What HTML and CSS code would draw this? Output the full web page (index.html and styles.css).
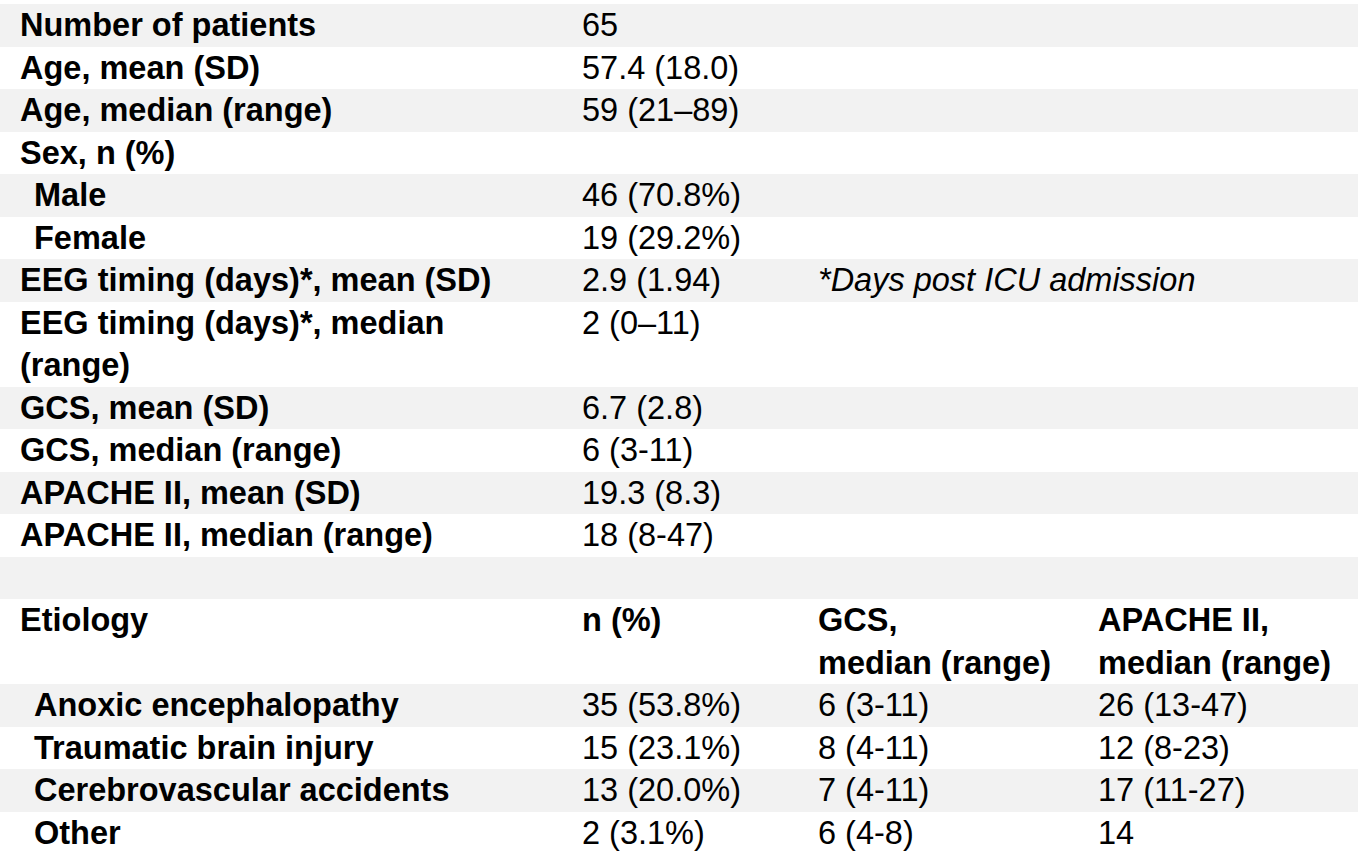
FILE: index.html
```html
<!DOCTYPE html>
<html lang="en">
<head>
<meta charset="utf-8">
<title>Patient characteristics</title>
<link rel="stylesheet" href="styles.css">
</head>
<body>
<table class="stats">
  <colgroup>
    <col class="c-label">
    <col class="c-val">
    <col class="c-wide">
    <col class="c-wide">
  </colgroup>
  <tbody>
    <tr><th>Number of patients</th><td>65</td><td></td><td></td></tr>
    <tr><th>Age, mean (SD)</th><td>57.4 (18.0)</td><td></td><td></td></tr>
    <tr><th>Age, median (range)</th><td>59 (21–89)</td><td></td><td></td></tr>
    <tr><th>Sex, n (%)</th><td></td><td></td><td></td></tr>
    <tr><th class="sub">Male</th><td>46 (70.8%)</td><td></td><td></td></tr>
    <tr><th class="sub">Female</th><td>19 (29.2%)</td><td></td><td></td></tr>
    <tr><th>EEG timing (days)*, mean (SD)</th><td>2.9 (1.94)</td><td class="note" colspan="2">*Days post ICU admission</td></tr>
    <tr><th>EEG timing (days)*, median (range)</th><td>2 (0–11)</td><td></td><td></td></tr>
    <tr><th>GCS, mean (SD)</th><td>6.7 (2.8)</td><td></td><td></td></tr>
    <tr><th>GCS, median (range)</th><td>6 (3-11)</td><td></td><td></td></tr>
    <tr><th>APACHE II, mean (SD)</th><td>19.3 (8.3)</td><td></td><td></td></tr>
    <tr><th>APACHE II, median (range)</th><td>18 (8-47)</td><td></td><td></td></tr>
    <tr class="spacer"><th></th><td></td><td></td><td></td></tr>
    <tr class="head"><th>Etiology</th><th>n (%)</th><th>GCS,<br>median (range)</th><th>APACHE II,<br>median (range)</th></tr>
    <tr><th class="sub">Anoxic encephalopathy</th><td>35 (53.8%)</td><td>6 (3-11)</td><td>26 (13-47)</td></tr>
    <tr><th class="sub">Traumatic brain injury</th><td>15 (23.1%)</td><td>8 (4-11)</td><td>12 (8-23)</td></tr>
    <tr><th class="sub">Cerebrovascular accidents</th><td>13 (20.0%)</td><td>7 (4-11)</td><td>17 (11-27)</td></tr>
    <tr><th class="sub">Other</th><td>2 (3.1%)</td><td>6 (4-8)</td><td>14</td></tr>
  </tbody>
</table>
</body>
</html>
```

FILE: styles.css
```css
html, body {
  margin: 0;
  padding: 0;
  background: #ffffff;
}

body {
  padding-top: 4px;
  font-family: "Liberation Sans", Arial, sans-serif;
  font-size: 32.5px;
  line-height: 42.5px;
  color: #000000;
}

.stats {
  width: 1358px;
  border-collapse: collapse;
  border-spacing: 0;
  table-layout: fixed;
}

.c-label { width: 562px; }
.c-val { width: 236px; }
.c-wide { width: 280px; }

.stats th,
.stats td {
  padding: 0 18px 0 20px;
  vertical-align: top;
  text-align: left;
  height: 42.5px;
}

.stats th {
  font-weight: bold;
}

.stats td {
  font-weight: normal;
}

.stats tr:nth-child(odd) {
  background: #f2f2f2;
}

.stats th.sub {
  padding-left: 34px;
}

.stats .head th {
  white-space: nowrap;
}

.stats td.note {
  font-style: italic;
  white-space: nowrap;
}
```
